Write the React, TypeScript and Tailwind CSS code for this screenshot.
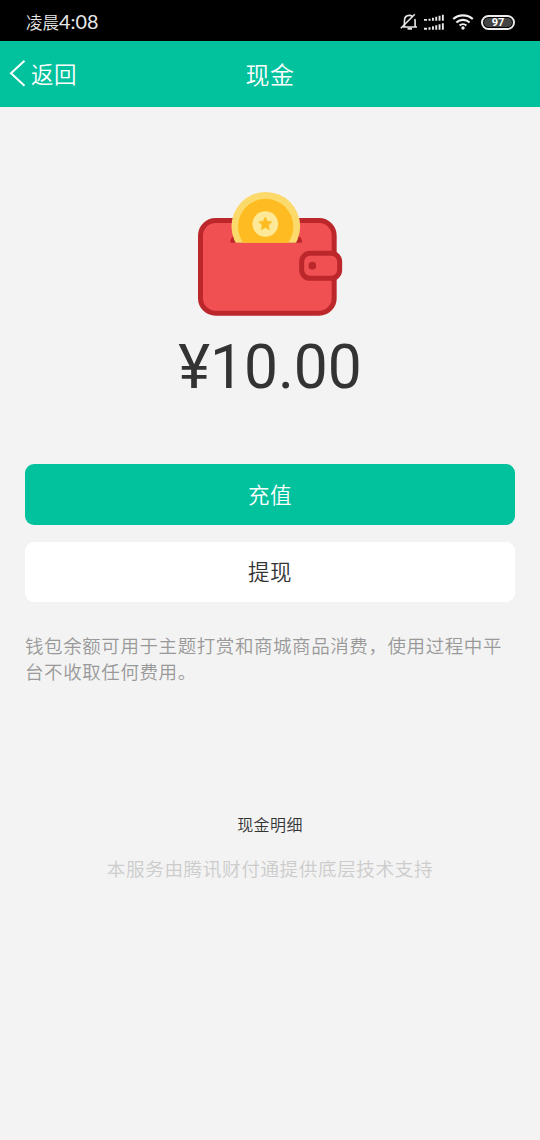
import React from "react";

function StatusIcons() {
  return (
    <div className="flex items-center pt-px">
      <svg width="18" height="18" viewBox="0 0 18 18" fill="none" stroke="#e8e8e8" strokeWidth="1.6">
        <path d="M3 14h14M4.400 13.500V8c0-3.600 2-5.600 5.100-5.600 1.200 0 2.100.3 2.900.9M14.700 6c.3.700.4 1.400.4 2.200v5.300" />
        <path d="M0.800 15.300 14.800 1.200" />
        <path d="M7.500 15.700h4.500" strokeWidth="2" />
      </svg>
      <svg className="ml-[5px]" width="22" height="18" viewBox="0 0 22 18" fill="#e8e8e8">
        <path d="M1 6h3v1.800h-3zM5.500 5.700h2v2.100h-2zM9 4.800h1.900v3h-1.900zM12.300 3.800h1.900v4h-1.900zM15.600 2.800h1.900v5h-1.900zM18.900 1.800h1.900v6h-1.900z" />
        <path d="M1 14.700h3v2h-3zM5.500 14.200h2v2.500h-2zM9 13.200h1.900v3.500h-1.900zM12.300 12.200h1.900v4.500h-1.900zM15.600 11.200h1.900v5.500h-1.900zM18.900 10.200h1.900v6.500h-1.900z" />
      </svg>
      <svg className="ml-[7px]" width="22" height="18" viewBox="0 0 22 18" fill="none" stroke="#f0f0f0" strokeWidth="2.100">
        <path d="M1.200 6.100c5.400-5 14.200-5 19.600 0M4.400 9.400c3.700-3.400 9.500-3.400 13.200 0M7.600 12.500c1.900-1.700 4.900-1.700 6.800 0" />
        <circle cx="11" cy="15" r="1.700" fill="#f0f0f0" stroke="none" />
      </svg>
      <div className="ml-[7px] flex h-[15px] w-[34px] items-center justify-center rounded-full border-2 border-[#ededed] bg-black p-px">
        <div className="flex h-full w-full items-center justify-center rounded-full bg-[#444] text-[11px] leading-none font-bold text-white">
          97
        </div>
      </div>
    </div>
  );
}

function Wallet() {
  return (
    <svg className="mx-auto block" width="170" height="145" viewBox="0 0 510 435">
      <defs>
        <clipPath id="pocket">
          <rect width="510" height="188" />
        </clipPath>
      </defs>
      <rect x="46.500" y="121.500" width="401" height="278" rx="45" fill="#f15053" stroke="#bc272b" strokeWidth="15" />
      <path d="M136 188c0-12 5-19 14-19h188c9 0 13 7 13 19z" fill="#bc272b" />
      <g clipPath="url(#pocket)">
        <circle cx="242.500" cy="139" r="103" fill="#fbd96b" />
        <circle cx="242" cy="139.500" r="83" fill="#febc22" />
      </g>
      <circle cx="241" cy="132" r="38.500" fill="#fde998" />
      <path d="m241 111 6 12.500 13.500 2-10 9.500 2.500 14-12-6.500-12 6.500 2.500-14-10-9.500 13.500-2z" fill="#febc22" stroke="#febc22" strokeWidth="2" strokeLinejoin="round" />
      <rect x="350" y="220" width="114" height="75" rx="25" fill="#f15053" stroke="#bc272b" strokeWidth="15" />
      <circle cx="382" cy="257" r="11.500" fill="#bc272b" />
    </svg>
  );
}

export default function App() {
  return (
    <div className="flex h-[1140px] w-[540px] flex-col overflow-hidden bg-[#f3f3f3] font-['Roboto','Noto_Sans_CJK_SC',sans-serif] text-[#333]">
      <div className="flex h-[41px] shrink-0 items-center justify-between bg-black pt-[2px] pr-[25px] pl-[26px] text-[#e8e8e8]">
        <div className="flex items-baseline pt-[2px] text-[16.500px] leading-[24px] font-[350]">
          凌晨<span className="font-['Lato','Noto_Sans',sans-serif] text-[19.800px] font-normal">4:08</span>
        </div>
        <StatusIcons />
      </div>
      <header className="grid h-[66px] shrink-0 grid-cols-3 items-center bg-[#02c19d] text-white">
        <div className="flex items-center pl-[9px] text-[22.500px] leading-[30px] font-[350] tracking-[0.5px]">
          <svg className="mr-[5px]" width="17" height="28" viewBox="0 0 17 28" fill="none" stroke="white" strokeWidth="2">
            <path d="M15.500 0.700 2 13.200l13.500 12.500" />
          </svg>
          <span className="pt-[2px]">返回</span>
        </div>
        <h1 className="pt-[4px] text-center text-[24px] leading-[30px] font-[350] tracking-[0.5px]">现金</h1>
      </header>
      <main className="flex flex-col px-[25px] pt-[73px]">
        <Wallet />
        <div className="mt-[3px] h-[80px] text-center text-[60.500px] leading-[80px]">¥10.00</div>
        <button className="mt-[56px] h-[61px] rounded-[9px] bg-[#02c19d] pt-[4px] text-[21.500px] font-[350] tracking-[0.5px] text-white">充值</button>
        <button className="mt-[17px] h-[60px] rounded-[9px] bg-white pt-[3px] text-[21.500px] font-[350] tracking-[0.5px]">提现</button>
        <p className="mt-[32px] text-[18.500px] leading-[26px] font-[350] tracking-[0.58px] whitespace-nowrap text-[#999]">
          钱包余额可用于主题打赏和商城商品消费，使用过程中平
          <br />
          台不收取任何费用。
        </p>
        <div className="mt-[128px] text-center text-[16px] leading-[24px] font-[350] tracking-[0.4px]">现金明细</div>
        <div className="mt-[18px] text-center text-[18.600px] leading-[28px] font-[350] tracking-[0.6px] text-[#ccc]">
          本服务由腾讯财付通提供底层技术支持
        </div>
      </main>
    </div>
  );
}
